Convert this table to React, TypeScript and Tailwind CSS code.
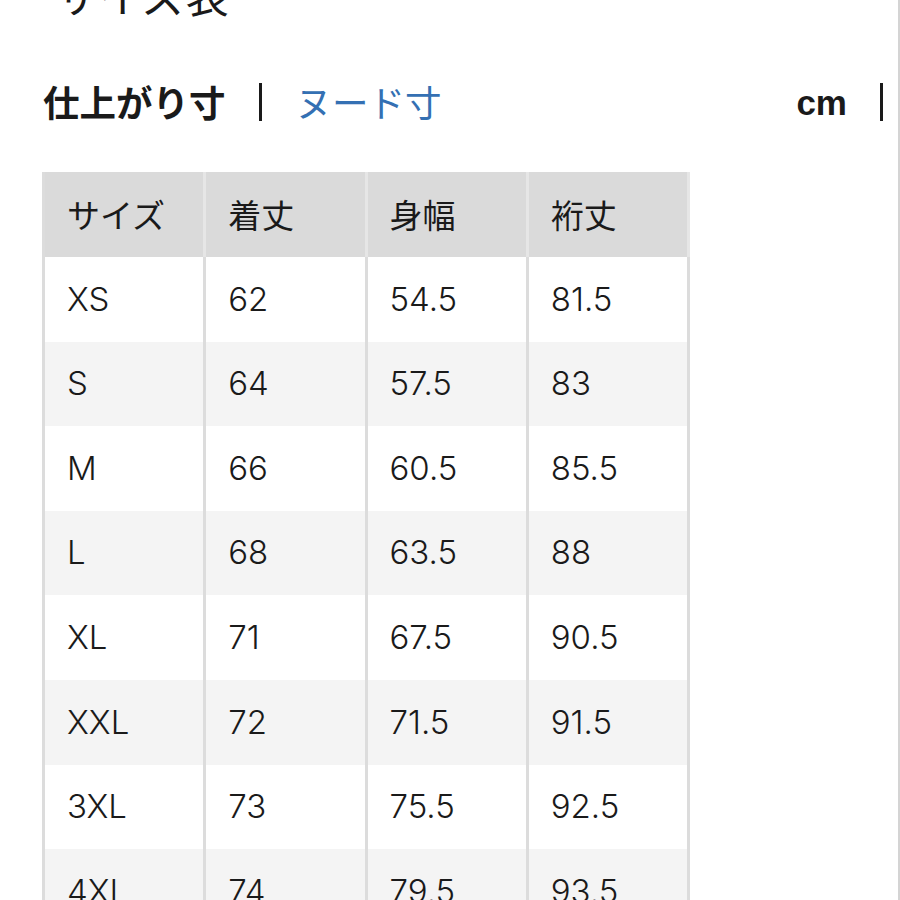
import React from 'react'

const rows = [
  ['XS', '62', '54.5', '81.5'],
  ['S', '64', '57.5', '83'],
  ['M', '66', '60.5', '85.5'],
  ['L', '68', '63.5', '88'],
  ['XL', '71', '67.5', '90.5'],
  ['XXL', '72', '71.5', '91.5'],
  ['3XL', '73', '75.5', '92.5'],
  ['4XL', '74', '79.5', '93.5'],
]

const headers = ['サイズ', '着丈', '身幅', '裄丈']

export default function App() {
  return (
    <div
      className="w-[900px] h-[900px] overflow-hidden bg-white text-[#1a1a1a] border-r-2 border-[#d4d4d4]"
      style={{ fontFamily: '"Noto Sans CJK JP", "Noto Sans", sans-serif' }}
    >
      {/* page title, cut off at the top */}
      <div className="h-[22px] overflow-hidden relative">
        <div className="absolute left-[55px] bottom-[6px] text-[43px] leading-none tracking-[1px]">
          サイズ表
        </div>
      </div>

      {/* toggle + unit */}
      <div className="mt-[57px] h-[46px] flex items-center pl-[43px] pr-[15px]">
        <span className="text-[36.5px] font-bold leading-none">仕上がり寸</span>
        <span className="ml-[33px] w-[3px] h-[38px] bg-[#1a1a1a]" />
        <span className="ml-[34px] text-[36.5px] leading-none text-[#3470b3]">ヌード寸</span>
        <span className="ml-auto text-[35px] font-bold leading-none" style={{ fontFamily: '"Liberation Sans", Arial, sans-serif' }}>
          cm
        </span>
        <span className="ml-[33px] w-[3px] h-[38px] bg-[#1a1a1a]" />
      </div>

      {/* size table */}
      <div className="mt-[47px] ml-[42px] w-[648px] border-l-[3px] border-[#dcdcdc]">
        <div className="grid grid-cols-4 h-[85px] bg-[#dadada]">
          {headers.map((h) => (
            <div key={h} className="flex items-center pl-[22px] border-r-[3px] border-[#e6e6e6] text-[33px]">
              {h}
            </div>
          ))}
        </div>
        {rows.map((r, i) => (
          <div key={r[0]} className={`grid grid-cols-4 h-[84.6px] ${i % 2 === 1 ? 'bg-[#f4f4f4]' : 'bg-white'}`}>
            {r.map((c, j) => (
              <div
                key={j}
                className="flex items-center pl-[22px] border-r-[3px] border-[#dcdcdc] text-[33px] font-light"
                style={{ fontFamily: 'Inter, "Liberation Sans", sans-serif' }}
              >
                {c}
              </div>
            ))}
          </div>
        ))}
      </div>
    </div>
  )
}
